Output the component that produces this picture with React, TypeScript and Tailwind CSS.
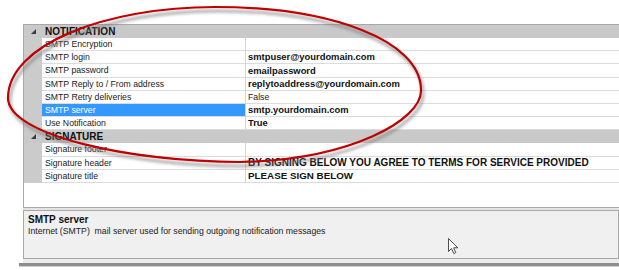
import React from "react";

type Item = {
  name: string;
  value?: string;
  bold?: boolean;
  selected?: boolean;
  h: string;
  vsize?: string;
};

type Section = { title: string; items: Item[] };

const sections: Section[] = [
  {
    title: "NOTIFICATION",
    items: [
      { name: "SMTP Encryption", h: "h-[13px]" },
      { name: "SMTP login", value: "smtpuser@yourdomain.com", bold: true, h: "h-[13px]" },
      { name: "SMTP password", value: "emailpassword", bold: true, h: "h-[14px]" },
      { name: "SMTP Reply to / From address", value: "replytoaddress@yourdomain.com", bold: true, h: "h-[13px]" },
      { name: "SMTP Retry deliveries", value: "False", h: "h-[13px]" },
      { name: "SMTP server", value: "smtp.yourdomain.com", bold: true, selected: true, h: "h-[13px]" },
      { name: "Use Notification", value: "True", bold: true, h: "h-[13px]" },
    ],
  },
  {
    title: "SIGNATURE",
    items: [
      { name: "Signature footer", h: "h-[14px]" },
      {
        name: "Signature header",
        value: "BY SIGNING BELOW YOU AGREE TO TERMS FOR SERVICE PROVIDED",
        bold: true,
        h: "h-[13px]",
        vsize: "text-[10px]",
      },
      { name: "Signature title", value: "PLEASE SIGN BELOW", bold: true, h: "h-[13px]", vsize: "text-[9.8px]" },
    ],
  },
];

function Triangle() {
  return (
    <svg width="5" height="5" viewBox="0 0 5 5">
      <polygon points="5,0 5,5 0,5" fill="#3c3c3c" />
    </svg>
  );
}

function Row({ item }: { item: Item }) {
  return (
    <div className={`flex ${item.h}`}>
      <div className="w-[18px] shrink-0 bg-[#cbcbcb]" />
      <div
        className={`w-[203px] shrink-0 border-b border-[#dcdcdc] flex items-center pl-[3px] text-[8.7px] leading-none whitespace-nowrap overflow-hidden ${
          item.selected ? "bg-[#3399ff] text-white" : "bg-white text-[#1a1a1a]"
        }`}
      >
        {item.name}
      </div>
      <div className="w-px shrink-0 bg-[#d4d4d4]" />
      <div
        className={`flex-1 border-b border-[#dcdcdc] flex items-center pl-[2px] leading-none whitespace-nowrap overflow-hidden bg-white ${
          item.bold ? `font-bold text-[#111111] ${item.vsize ?? "text-[9.4px]"}` : "text-[8.7px] text-[#1a1a1a]"
        }`}
      >
        {item.value ?? ""}
      </div>
    </div>
  );
}

export default function App() {
  return (
    <div
      className="relative w-[619px] h-[270px] bg-white overflow-hidden"
      style={{ fontFamily: '"Liberation Sans", Arial, sans-serif' }}
    >
      <div className="pt-[24px] pl-[23px]">
        {/* grid box */}
        <div className="h-[184px] border-l border-t border-b border-[#a8a8a8] bg-white flex flex-col">
          {sections.map((s) => (
            <div key={s.title} className="flex flex-col">
              <div className="flex h-[13px] bg-[#c9c9c9]">
                <div className="w-[18px] shrink-0 flex items-center justify-center">
                  <Triangle />
                </div>
                <div className="pl-[3px] flex items-center font-bold text-[10px] leading-none text-[#111111]">
                  {s.title}
                </div>
              </div>
              {s.items.map((it) => (
                <Row key={it.name} item={it} />
              ))}
            </div>
          ))}
        </div>
        {/* splitter */}
        <div className="h-[2px] bg-[#e4e4e4]" />
        {/* help panel */}
        <div className="h-[49px] border border-[#a8a8a8] bg-[#f0f0f0] pl-[4px] pt-[3px]">
          <div className="font-bold text-[10px] leading-[12px] text-[#111111]">SMTP server</div>
          <div className="text-[8.7px] leading-[11px] text-[#1a1a1a] whitespace-pre">
            Internet (SMTP)  mail server used for sending outgoing notification messages
          </div>
        </div>
        <div className="h-[4px] bg-[#ececec]" />
        <div className="-ml-[4px] h-[3px] bg-[#8c8c8c]" />
        <div className="-ml-[4px] h-[1px] bg-[#d0d0d0]" />
      </div>

      {/* annotation overlay */}
      <svg
        className="absolute inset-0 pointer-events-none"
        width="619"
        height="270"
        viewBox="0 0 619 270"
      >
        <defs>
          <filter id="blur" x="-10%" y="-10%" width="120%" height="120%">
            <feGaussianBlur stdDeviation="1.6" />
          </filter>
        </defs>
        <path
          d="M8 98 C8 45 105 7 215 7 C330 7 421 40 421 90 C422 120 350 160 240 162 C130 162 8 135 8 98 Z"
          fill="none"
          stroke="#7a7a7a"
          strokeOpacity="0.6"
          strokeWidth="3"
          transform="translate(2 4)"
          filter="url(#blur)"
        />
        <path
          d="M8 98 C8 45 105 7 215 7 C330 7 421 40 421 90 C422 120 350 160 240 162 C130 162 8 135 8 98 Z"
          fill="none"
          stroke="#c00000"
          strokeWidth="2.2"
        />
        {/* mouse cursor */}
        <g transform="translate(448 238)">
          <path
            d="M0.5 0.5 L0.5 13.5 L3.5 10.5 L5.8 15.5 L7.8 14.6 L5.6 9.8 L9.8 9.8 Z"
            fill="#ffffff"
            stroke="#3a3a3a"
            strokeWidth="0.9"
            strokeLinejoin="round"
          />
        </g>
      </svg>
    </div>
  );
}
